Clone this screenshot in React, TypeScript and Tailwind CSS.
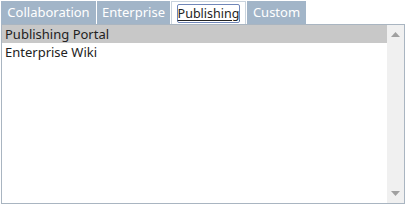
import React from 'react';

const tabs = [
  { label: 'Collaboration', w: 'w-[95px]' },
  { label: 'Enterprise', w: 'w-[73px]' },
  { label: 'Publishing', w: 'w-[75px]', active: true },
  { label: 'Custom', w: 'w-[59px]' },
];

const rows = ['Publishing Portal', 'Enterprise Wiki'];

export default function App() {
  return (
    <div
      className="w-[409px] h-[207px] bg-white"
      style={{ fontFamily: '"Noto Sans", "Open Sans", sans-serif' }}
    >
      {/* tab strip */}
      <div className="flex gap-[1px] pl-[1px] pt-[1px] h-[24px]">
        {tabs.map((t) =>
          t.active ? (
            <div
              key={t.label}
              className={`${t.w} h-[23px] bg-white border border-[#c9d3dd] border-b-0 flex items-center justify-center pt-[1px]`}
            >
              <span className="border border-[#6f86b8] rounded-[2px] leading-[17px] text-[12.5px] text-[#222] underline underline-offset-2">
                {t.label}
              </span>
            </div>
          ) : (
            <div
              key={t.label}
              className={`${t.w} h-[23px] bg-[#a2b5c8] flex items-center justify-center pt-[1px] text-[13px] text-white`}
            >
              {t.label}
            </div>
          )
        )}
      </div>

      {/* list panel */}
      <div className="ml-[1px] w-[404px] h-[180px] border border-[#a9b5c1] flex">
        <div className="flex-1 text-[13px] text-[#222] leading-[18px]">
          {rows.map((r, i) => (
            <div key={r} className={`h-[18px] pl-[3px] ${i === 0 ? 'bg-[#c8c8c8]' : ''}`}>
              {r}
            </div>
          ))}
        </div>
        {/* scrollbar */}
        <div className="w-[17px] bg-[#f0f0f0] flex flex-col items-center justify-between py-[7px]">
          <svg width="9" height="5" viewBox="0 0 9 5">
            <path d="M0 5 L4.5 0 L9 5 Z" fill="#a0a0a0" />
          </svg>
          <svg width="9" height="5" viewBox="0 0 9 5">
            <path d="M0 0 L9 0 L4.5 5 Z" fill="#a0a0a0" />
          </svg>
        </div>
      </div>
    </div>
  );
}
